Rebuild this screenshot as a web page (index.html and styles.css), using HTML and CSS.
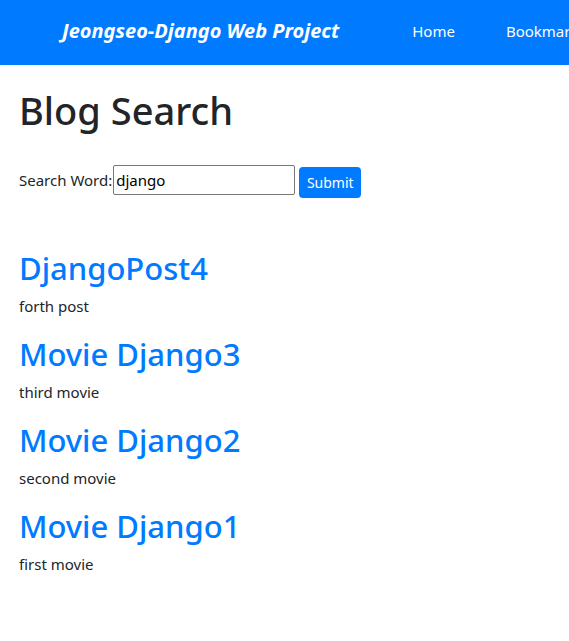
FILE: index.html
```html
<!DOCTYPE html>
<html lang="en">
<head>
<meta charset="utf-8">
<title>Blog Search</title>
<link rel="stylesheet" href="styles.css">
</head>
<body>
<nav class="navbar">
  <a class="brand" href="#">Jeongseo-Django Web Project</a>
  <ul class="nav">
    <li><a href="#">Home</a></li>
    <li><a href="#">Bookmark</a></li>
  </ul>
</nav>
<main class="content">
  <h1 class="title">Blog Search</h1>
  <form class="search">
    <label class="label" for="q">Search Word:</label><input id="q" class="input" type="text" value="django"><button class="btn" type="button">Submit</button>
  </form>
  <section class="results">
    <article class="post">
      <h2 class="post-title"><a href="#">DjangoPost4</a></h2>
      <p class="post-desc">forth post</p>
    </article>
    <article class="post">
      <h2 class="post-title"><a href="#">Movie Django3</a></h2>
      <p class="post-desc">third movie</p>
    </article>
    <article class="post">
      <h2 class="post-title"><a href="#">Movie Django2</a></h2>
      <p class="post-desc">second movie</p>
    </article>
    <article class="post">
      <h2 class="post-title"><a href="#">Movie Django1</a></h2>
      <p class="post-desc">first movie</p>
    </article>
  </section>
</main>
</body>
</html>
```
FILE: styles.css
```css
* { box-sizing: border-box; }
html, body { margin: 0; padding: 0; }
body {
  font-family: "Noto Sans", "Open Sans", sans-serif;
  font-size: 15px;
  color: #212529;
  background: #fff;
  overflow: hidden;
}
a { text-decoration: none; }
.navbar {
  display: flex;
  align-items: center;
  height: 65px;
  padding: 0 0 4px 62px;
  background: #007bff;
  white-space: nowrap;
}
.brand {
  color: #fff;
  font-weight: 700;
  font-style: italic;
  font-size: 20px;
}
.nav {
  display: flex;
  list-style: none;
  margin: 0 0 0 73px;
  padding: 0;
  gap: 51px;
}
.nav a {
  color: #fff;
  font-size: 15px;
}
.content {
  padding: 0 19px;
}
.title {
  margin: 21px 0 0;
  font-size: 38px;
  font-weight: 500;
  line-height: 48px;
}
.search {
  display: flex;
  align-items: flex-start;
  margin-top: 31px;
}
.label {
  font-size: 15px;
  line-height: 30px;
}
.input {
  width: 182px;
  height: 30px;
  margin-left: 1px;
  border: 1px solid #767676;
  border-radius: 2px;
  padding: 0 2px;
  font-family: inherit;
  font-size: 15px;
  color: #000;
}
.btn {
  margin: 2px 0 0 4px;
  width: 62px;
  height: 31px;
  padding: 0;
  border: none;
  border-radius: 4px;
  background: #007bff;
  color: #fff;
  font-family: inherit;
  font-size: 14px;
}
.results { margin-top: 51px; }
.post { margin-bottom: 18px; }
.post-title {
  margin: 0;
  font-size: 31px;
  font-weight: 500;
  line-height: 38px;
}
.post-title a { color: #007bff; }
.post-desc {
  margin: 8px 0 0;
  font-size: 15px;
  line-height: 22px;
}
```
